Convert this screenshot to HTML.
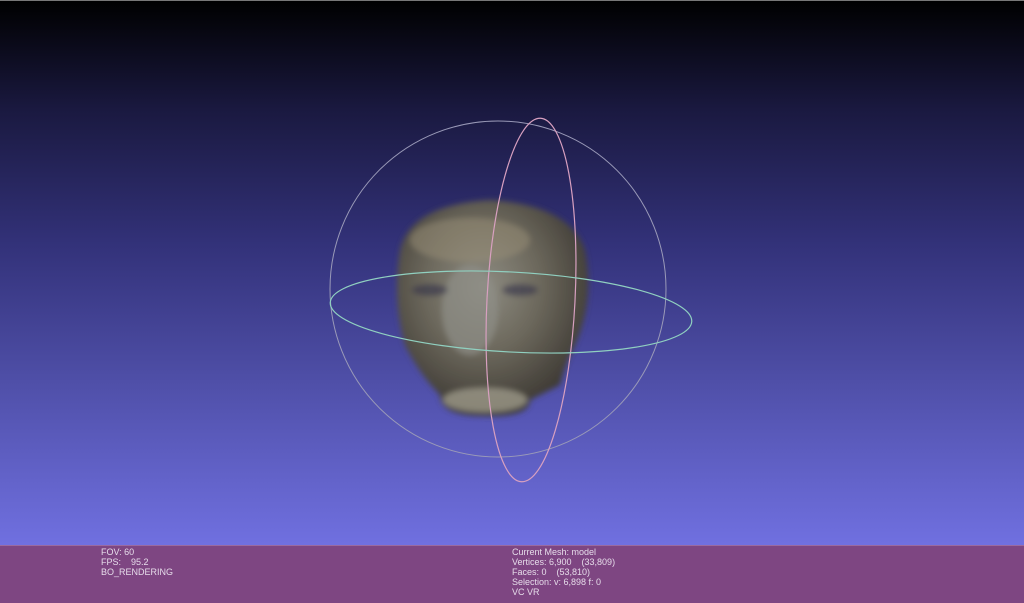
<!DOCTYPE html>
<html><head><meta charset="utf-8"><style>
html,body{margin:0;padding:0;width:1024px;height:603px;overflow:hidden;background:#000}
#v{position:absolute;left:0;top:0;width:1024px;height:545px;background:linear-gradient(#000 0%,#1a1940 20%,#33327a 45%,#4f4fa8 70%,#7070e0 100%);border-top:1px solid #777;box-sizing:border-box}
#b{position:absolute;left:0;top:545px;width:1024px;height:58px;background:#7e4682;border-top:1px solid #9a6aa0;box-sizing:border-box;font:9px/10px "Liberation Sans",sans-serif;color:#e6dcea}
.t{position:absolute;white-space:pre}
</style></head><body>
<div id="v"></div>
<svg width="1024" height="545" style="position:absolute;left:0;top:0">
<defs>
<radialGradient id="h" cx="0.45" cy="0.4" r="0.6">
<stop offset="0" stop-color="#8e8c82"/><stop offset="0.5" stop-color="#6c685c"/><stop offset="1" stop-color="#3e3a34"/>
</radialGradient>
<filter id="bl"><feGaussianBlur stdDeviation="3"/></filter>
</defs>
<circle cx="498" cy="289" r="168" fill="none" stroke="#9a9ab8" stroke-width="1"/>
<g filter="url(#bl)">
<path d="M400 250 Q410 205 490 200 Q570 205 585 250 Q595 300 575 345 Q565 365 560 385 Q540 395 530 400 Q530 418 480 416 Q440 415 440 395 Q420 375 405 345 Q392 300 400 250Z" fill="url(#h)"/>
<ellipse cx="470" cy="310" rx="28" ry="45" fill="#8e8e88" opacity=".7"/>
<ellipse cx="470" cy="240" rx="60" ry="22" fill="#9a9078" opacity=".5"/>
<ellipse cx="430" cy="290" rx="18" ry="6" fill="#34324a" opacity=".6"/>
<ellipse cx="520" cy="290" rx="18" ry="6" fill="#34324a" opacity=".6"/>
<ellipse cx="485" cy="400" rx="42" ry="12" fill="#9c9888" opacity=".8"/>
</g>
<ellipse cx="531" cy="300" rx="44" ry="182" transform="rotate(3 531 300)" fill="none" stroke="#d8a0c0" stroke-width="1.2"/>
<ellipse cx="511" cy="312" rx="181" ry="40" transform="rotate(3 511 312)" fill="none" stroke="#90d0c0" stroke-width="1.2"/>
</svg>
<div id="b">
<div class="t" style="left:101px;top:1px">FOV: 60
FPS:    95.2
BO_RENDERING</div>
<div class="t" style="left:512px;top:1px">Current Mesh: model
Vertices: 6,900    (33,809)
Faces: 0    (53,810)
Selection: v: 6,898 f: 0
VC VR</div>
</div>
</body></html>
